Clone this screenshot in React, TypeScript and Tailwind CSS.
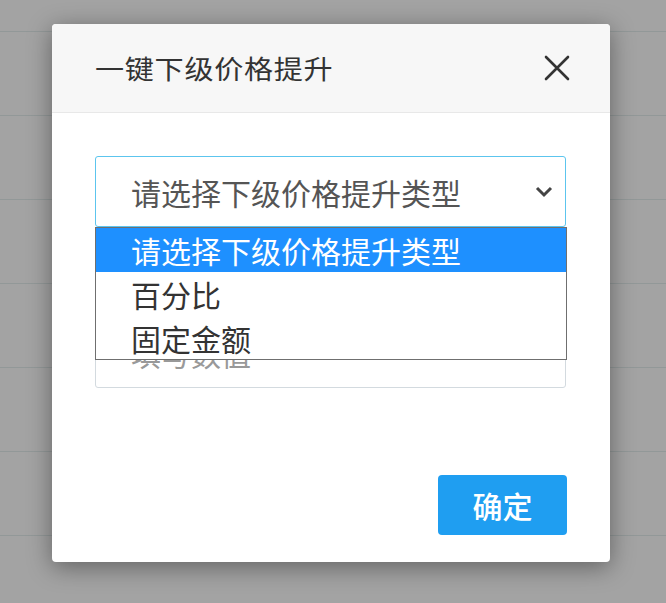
import React from "react";

export default function App() {
  const rows = [0, 1, 2, 3, 4, 5, 6];
  return (
    <div className="relative w-[666px] h-[603px] overflow-hidden bg-[#a3a3a3] font-['Noto_Sans_CJK_SC','Noto_Sans',sans-serif]">
      {/* background table rows */}
      <div className="flex flex-col">
        <div className="h-[31px]" />
        {rows.map((r) => (
          <div key={r} className="h-[84px] border-t border-[#929898]" />
        ))}
      </div>

      {/* modal */}
      <div className="absolute left-[52px] top-[24px] w-[558px] h-[538px] bg-white rounded-[4px] shadow-[0_5px_24px_rgba(0,0,0,0.4)] flex flex-col overflow-hidden">
        <div className="h-[89px] shrink-0 bg-[#f7f7f7] border-b border-[#e8e8e8] flex items-center justify-between pl-[43px] pr-[40px]">
          <div className="text-[26px] tracking-[0.6px] text-[#333] leading-none origin-left scale-x-[1.12]">一键下级价格提升</div>
          <svg width="26" height="26" viewBox="0 0 26 26">
            <path d="M2 2 L24 24 M24 2 L2 24" stroke="#333" strokeWidth="2.6" strokeLinecap="round" />
          </svg>
        </div>

        <div className="flex flex-col pl-[43px] pr-[43px] pt-[43px]">
          <div className="relative">
            <div className="h-[71px] w-[471px] border border-[#5cc5ee] rounded-[3px] flex items-center justify-between pl-[35px] pr-[12px]">
              <span className="text-[30px] text-[#555] leading-none">请选择下级价格提升类型</span>
              <svg width="18" height="12" viewBox="0 0 18 12">
                <polyline points="2,2 9,9 16,2" fill="none" stroke="#444" strokeWidth="3" />
              </svg>
            </div>
            <div className="absolute left-0 top-[71px] w-[472px] h-[133px] bg-white border border-[#6f6f6f] flex flex-col z-10">
              <div className="h-[44px] bg-[#1e90ff] text-white text-[30px] leading-none flex items-center pl-[35px]">请选择下级价格提升类型</div>
              <div className="h-[44px] text-[#333] text-[30px] leading-none flex items-center pl-[35px]">百分比</div>
              <div className="h-[43px] text-[#333] text-[30px] leading-none flex items-center pl-[35px]">固定金额</div>
            </div>
          </div>

          <div className="mt-[90px] h-[71px] w-[471px] border border-[#d3dadf] rounded-[3px] flex items-center pl-[35px]">
            <span className="text-[30px] text-[#999] leading-none">填写数值</span>
          </div>

          <div className="flex justify-end mt-[87px]">
            <button className="w-[129px] h-[60px] bg-[#1f9ef1] rounded-[4px] text-white text-[30px] leading-none font-medium flex items-center justify-center">
              确定
            </button>
          </div>
        </div>
      </div>
    </div>
  );
}
